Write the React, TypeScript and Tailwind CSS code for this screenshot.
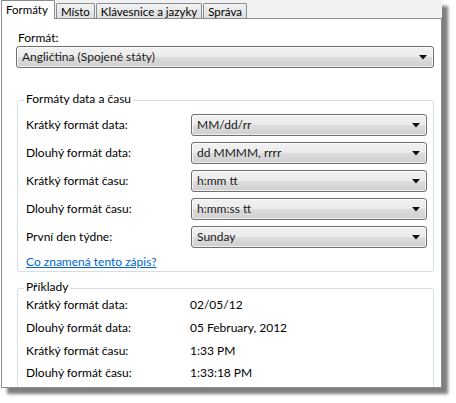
import React from "react";

const font = { fontFamily: "Lato, 'Noto Sans', sans-serif" };

function Arrow() {
  return (
    <svg width="8" height="5" viewBox="0 0 8 5" className="shrink-0">
      <path d="M0 0 H8 L4 4.5 Z" fill="#111" />
    </svg>
  );
}

function Combo({ value, className = "" }: { value: string; className?: string }) {
  return (
    <div
      className={
        "h-[22px] flex items-center justify-between pl-[5px] pr-[6px] rounded-[3px] border border-[#707070] bg-[linear-gradient(#f2f2f2_0%,#ebebeb_50%,#dddddd_51%,#cfcfcf_100%)] shadow-[inset_0_0_0_1px_rgba(255,255,255,0.7)] text-[#1a1a1a] " +
        className
      }
    >
      <span>{value}</span>
      <Arrow />
    </div>
  );
}

function Tab({ label, active }: { label: string; active?: boolean }) {
  if (active) {
    return (
      <div className="h-[19px] -mb-[1px] relative z-10 bg-white border-t border-r border-[#898c95] rounded-tr-[2px] pl-[4px] pr-[6px] leading-[18px] text-[11.5px]">
        {label}
      </div>
    );
  }
  return (
    <div className="mt-[3px] h-[15px] ml-[1px] border border-b-0 border-[#898c95] rounded-t-[2px] bg-[linear-gradient(#f2f2f2,#dedede)] px-[4px] leading-[15px] text-[11.5px]">
      {label}
    </div>
  );
}

const settings = [
  ["Krátký formát data:", "MM/dd/rr"],
  ["Dlouhý formát data:", "dd MMMM, rrrr"],
  ["Krátký formát času:", "h:mm tt"],
  ["Dlouhý formát času:", "h:mm:ss tt"],
  ["První den týdne:", "Sunday"],
];

const examples = [
  ["Krátký formát data:", "02/05/12"],
  ["Dlouhý formát data:", "05 February, 2012"],
  ["Krátký formát času:", "1:33 PM"],
  ["Dlouhý formát času:", "1:33:18 PM"],
];

export default function App() {
  return (
    <div className="w-[456px] h-[403px] bg-white pl-[1px] text-[12px] text-black overflow-hidden" style={font}>
      <div className="w-[441px] shadow-[6px_6px_3px_rgba(0,0,0,0.5)]">
        {/* Záložky */}
        <div className="h-[18px] flex items-start bg-[#f1f1f1] border-l border-[#898c95]">
          <Tab label="Formáty" active />
          <Tab label="Místo" />
          <Tab label="Klávesnice a jazyky" />
          <Tab label="Správa" />
        </div>

        {/* Panel */}
        <div className="h-[370px] bg-white border border-[#898c95] pl-[14px] pr-[7px] pt-[11px] overflow-hidden">
          <div className="leading-[15px] pl-[2px]">Formát:</div>
          <Combo value="Angličtina (Spojené státy)" className="mt-[1px]" />

          {/* Formáty data a času */}
          <div className="mt-[32px] ml-[1px] border border-[#d5dfe5] rounded-[3px] pl-[8px] pr-[6px] pb-[2px]">
            <div className="-mt-[10px] -ml-[2px] w-fit px-[2px] bg-white leading-[15px]">
              Formáty data a času
            </div>
            <div className="mt-[8px] flex flex-col gap-[6px]">
              {settings.map(([label, value]) => (
                <div key={label} className="flex items-center">
                  <span className="w-[165px] shrink-0">{label}</span>
                  <Combo value={value} className="flex-1" />
                </div>
              ))}
            </div>
            <a href="#" className="block mt-[6px] w-fit leading-[15px] text-[#0066cc] underline">
              Co znamená tento zápis?
            </a>
          </div>

          {/* Příklady */}
          <div className="mt-[16px] ml-[1px] border border-[#d5dfe5] rounded-[3px] pl-[8px] pr-[6px] h-[140px]">
            <div className="-mt-[10px] -ml-[2px] w-fit px-[2px] bg-white leading-[15px]">Příklady</div>
            {examples.map(([label, value]) => (
              <div key={label} className="h-[22.67px] flex items-center">
                <span className="w-[164px] shrink-0">{label}</span>
                <span>{value}</span>
              </div>
            ))}
          </div>
        </div>
      </div>
    </div>
  );
}
